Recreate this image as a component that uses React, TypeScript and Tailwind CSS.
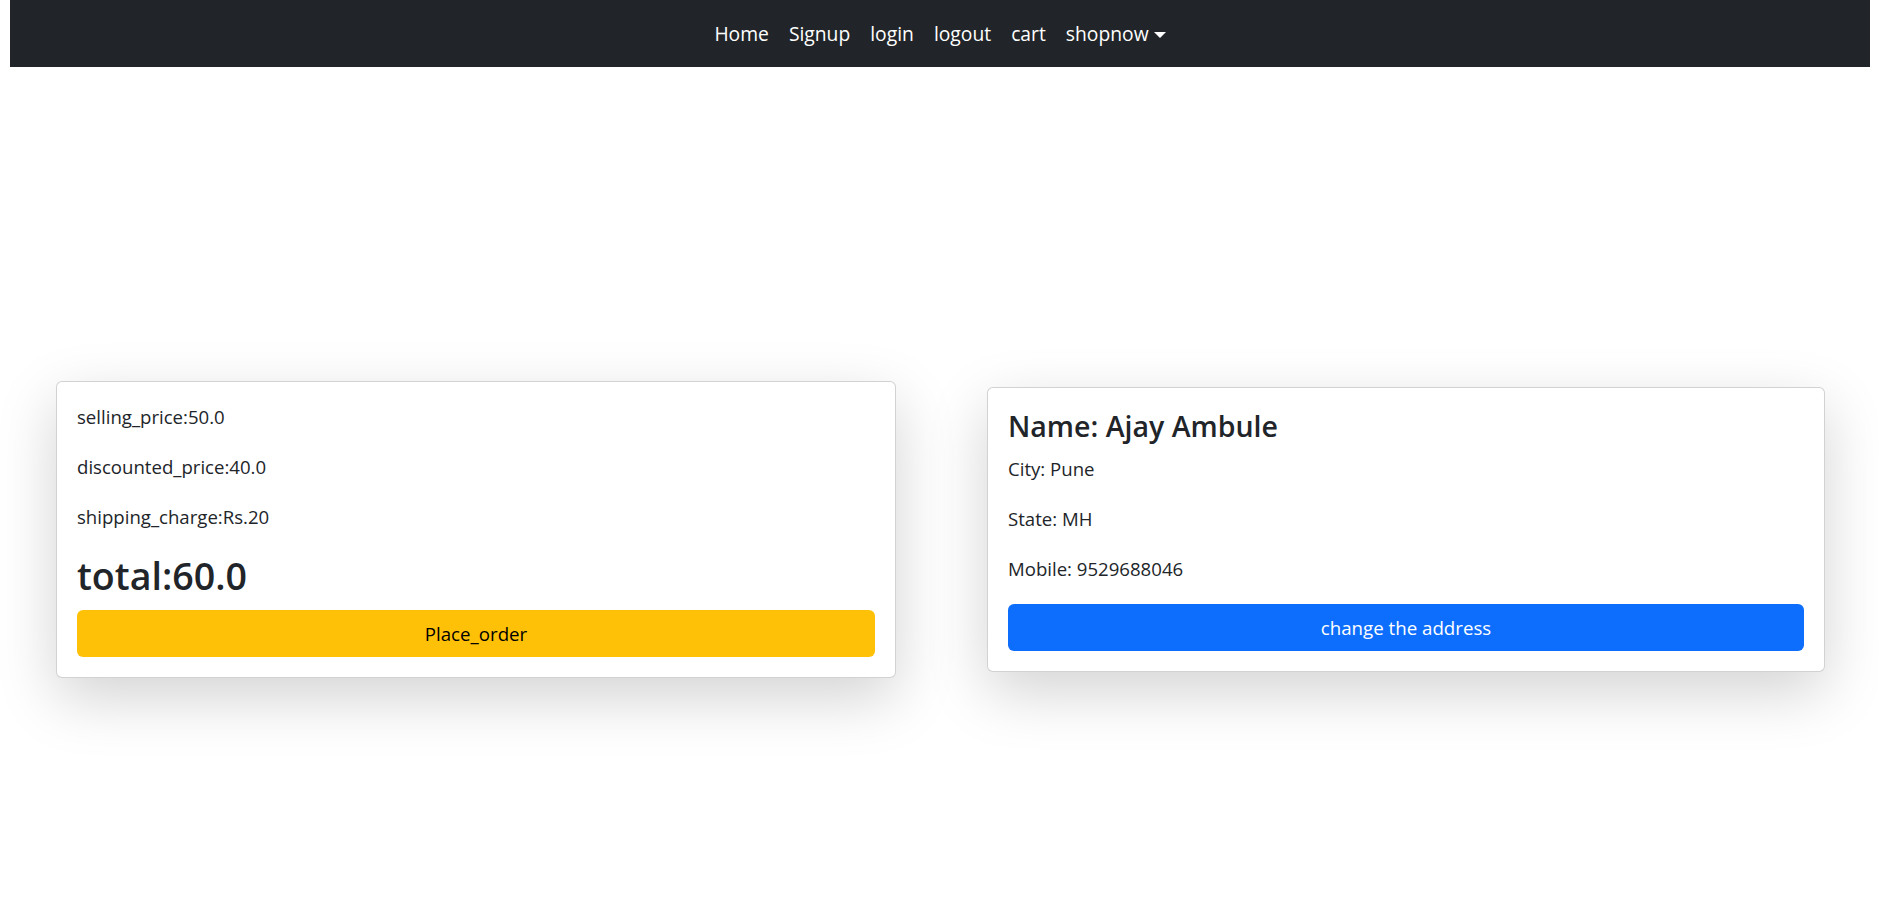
const font = { fontFamily: '"Open Sans", "Noto Sans", sans-serif' };

const navLinks = ['Home', 'Signup', 'login', 'logout', 'cart'];

function Navbar() {
  return (
    <nav className="ml-[10px] mr-[8px] flex h-[67px] items-center justify-center bg-[#212529]">
      <ul className="flex items-center">
        {navLinks.map((link) => (
          <li key={link}>
            <a href="#" className="block px-[10px] text-[19.3px] leading-[30px] text-white">
              {link}
            </a>
          </li>
        ))}
        <li>
          <a href="#" className="flex items-center px-[10px] text-[19.3px] leading-[30px] text-white">
            shopnow
            <span className="ml-[5px] mt-[2px] h-0 w-0 border-x-[6px] border-t-[6px] border-x-transparent border-t-white" />
          </a>
        </li>
      </ul>
    </nav>
  );
}

function OrderSummary() {
  return (
    <div className="w-[840px] rounded-[6px] border border-black/[.175] bg-white p-[20px] shadow-[0_20px_60px_rgba(0,0,0,0.175)]">
      <p className="mb-[20px] text-[18.6px] leading-[30px]">selling_price:50.0</p>
      <p className="mb-[20px] text-[18.6px] leading-[30px]">discounted_price:40.0</p>
      <p className="mb-[20px] text-[18.6px] leading-[30px]">shipping_charge:Rs.20</p>
      <h2 className="mb-[10px] text-[37.6px] font-semibold leading-[48px]">total:60.0</h2>
      <button className="block h-[47px] w-full rounded-[6px] bg-[#ffc107] text-[18.7px] leading-[30px] text-black">
        Place_order
      </button>
    </div>
  );
}

function AddressCard() {
  return (
    <div className="w-[838px] rounded-[6px] border border-black/[.175] bg-white p-[20px] shadow-[0_20px_60px_rgba(0,0,0,0.175)]">
      <h4 className="mb-[10px] text-[28.5px] font-semibold leading-[36px]">Name: Ajay Ambule</h4>
      <p className="mb-[20px] text-[18.6px] leading-[30px]">City: Pune</p>
      <p className="mb-[20px] text-[18.6px] leading-[30px]">State: MH</p>
      <p className="mb-[20px] text-[18.6px] leading-[30px]">Mobile: 9529688046</p>
      <button className="block h-[47px] w-full rounded-[6px] bg-[#0d6efd] text-[18.7px] leading-[30px] text-white">
        change the address
      </button>
    </div>
  );
}

export default function App() {
  return (
    <div className="min-h-screen bg-white text-[#212529]" style={font}>
      <Navbar />
      <main className="flex items-center gap-[91px] pl-[56px] pt-[314px]">
        <OrderSummary />
        <AddressCard />
      </main>
    </div>
  );
}
